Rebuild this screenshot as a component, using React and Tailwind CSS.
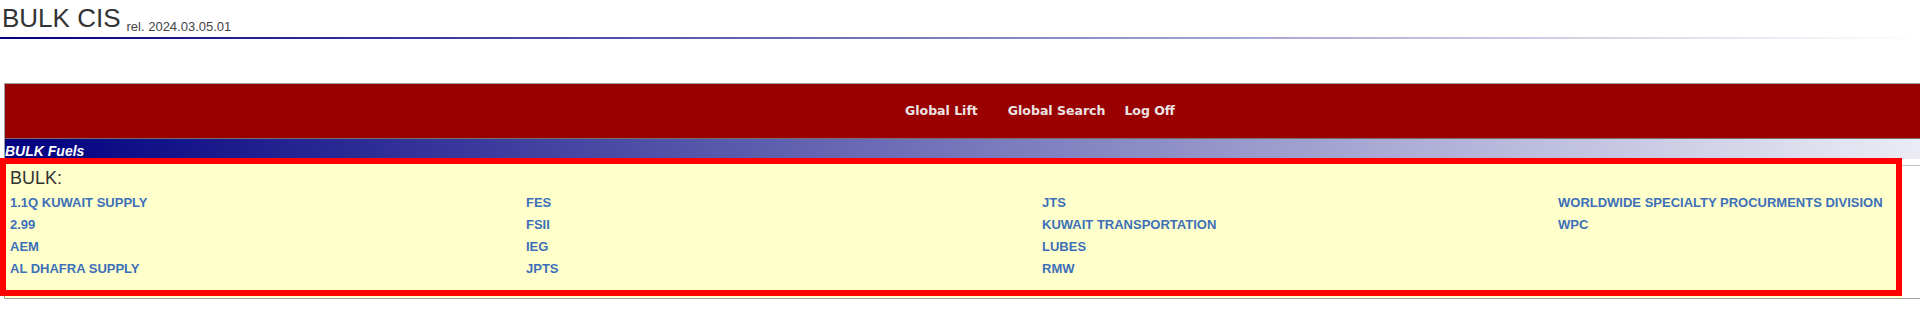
const columns = [
  ["1.1Q KUWAIT SUPPLY", "2.99", "AEM", "AL DHAFRA SUPPLY"],
  ["FES", "FSII", "IEG", "JPTS"],
  ["JTS", "KUWAIT TRANSPORTATION", "LUBES", "RMW"],
  ["WORLDWIDE SPECIALTY PROCURMENTS DIVISION", "WPC"],
];

const navLinks = ["Global Lift", "Global Search", "Log Off"];

const App = () => {
  return (
    <div className="relative w-full min-h-[324px] overflow-hidden bg-white font-['Liberation_Sans',Arial,sans-serif]">
      {/* header */}
      <div className="h-[37px] pt-[3px] pl-[2px] whitespace-nowrap">
        <span className="text-[26px] leading-[30px] text-[#333333]">BULK CIS</span>
        <span className="ml-[6px] text-[13px] text-[#444444] align-[-4px]">rel. 2024.03.05.01</span>
      </div>
      <div className="h-[2px] w-full bg-[linear-gradient(to_right,#000080,#ffffff)]"></div>

      {/* main box */}
      <div className="ml-[4px] mt-[44px] w-[2072px] border border-[#a0a0a0]">
        <div className="flex h-[54px] items-center justify-center bg-[#990000] font-['DejaVu_Sans',Verdana,sans-serif] text-[12.5px] font-bold text-[#ebe3e3]">
          <a className="cursor-pointer">{navLinks[0]}</a>
          <a className="ml-[30px] cursor-pointer">{navLinks[1]}</a>
          <a className="ml-[19px] cursor-pointer">{navLinks[2]}</a>
        </div>
        <div className="h-px bg-[#7a6a6a]"></div>
        <div className="h-[20px] overflow-hidden bg-[linear-gradient(to_right,#000080,#ffffff)] text-[14px] leading-[24px] font-bold italic text-white">
          BULK Fuels
        </div>
        <div className="flex h-[139px]">
          <div className="w-[1897px] bg-[#ffffcc] pt-[6px] pl-[5px]">
            <div className="text-[18px] text-[#333333]">BULK:</div>
            <div className="grid grid-cols-[516px_516px_516px_516px]">
              {columns.map((col, idx) => (
                <div key={idx} className="flex flex-col">
                  {col.map((name) => (
                    <a
                      key={name}
                      className="cursor-pointer whitespace-nowrap text-[13px] leading-[22px] font-bold text-[#3d70b8]"
                    >
                      {name}
                    </a>
                  ))}
                </div>
              ))}
            </div>
          </div>
          <div className="mt-[6px] flex-1 border-t border-[#c4c4c4]"></div>
        </div>
      </div>

      {/* highlight annotation */}
      <div className="pointer-events-none absolute left-0 top-[158px] h-[138px] w-[1902px] border-[6px] border-[#ff0000]"></div>
    </div>
  );
};

export default App;
